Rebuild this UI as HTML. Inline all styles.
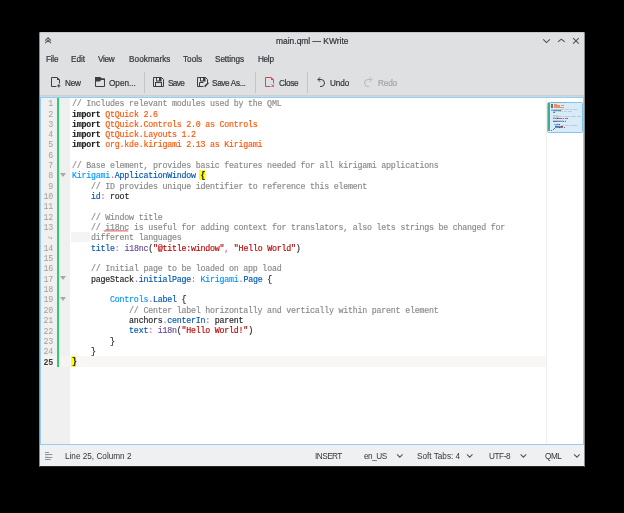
<!DOCTYPE html>
<html><head><meta charset="utf-8">
<style>
html,body{margin:0;padding:0;}
body{width:624px;height:513px;background:#000;position:relative;overflow:hidden;font-family:"Liberation Sans",sans-serif;}
.abs{position:absolute;}
#win{position:absolute;left:39px;top:32px;width:546px;height:435px;background:#dee0e2;border-radius:2px 2px 1px 1px;overflow:hidden;}
#winedge{position:absolute;left:39px;top:32px;width:544px;height:433px;border:1px solid #8a8b8c;border-top-color:#c6c7c8;border-bottom-color:#262728;border-radius:2px 2px 1px 1px;pointer-events:none;}
.ui{position:absolute;will-change:transform;-webkit-text-stroke:0.2px currentColor;white-space:nowrap;font-size:8.20px;line-height:10px;color:#31363b;}
.sep{position:absolute;width:1px;background:#c3c5c7;top:72px;height:21px;}
#toolsep{position:absolute;left:40px;top:95px;width:544px;height:1px;background:#ced0d2;}
#editor{position:absolute;left:40px;top:97px;width:542px;height:346px;border:1px solid #93cef0;background:#fff;overflow:hidden;}
#gutter{position:absolute;left:41px;top:98px;width:29px;height:346px;background:#f0f0f0;}
#green{position:absolute;left:57px;top:98px;width:2px;background:#2ecc71;}
.hl{display:inline-block;height:10.32px;vertical-align:top;background:#ffff00;font-weight:bold;}
.cl{position:absolute;will-change:transform;-webkit-text-stroke:0.15px currentColor;letter-spacing:-0.220px;left:71.70px;white-space:pre;font-family:"Liberation Mono",monospace;font-size:8.30px;line-height:10.32px;height:10.32px;color:#1f1c1b;}
.ln{position:absolute;will-change:transform;letter-spacing:-0.220px;left:41px;width:12px;text-align:right;font-family:"Liberation Mono",monospace;font-size:8.30px;line-height:10.32px;color:#a0a0a0;}
.ln.cur{color:#3a3a3a;font-weight:bold;}
.wrapm{font-size:7px;color:#9a9a9a;width:11.3px;}
.wrapblk{position:absolute;left:71px;width:19px;background:#f4f4f4;}
.mm{position:absolute;height:0.8px;}
.fold{position:absolute;left:59.9px;width:0;height:0;border-left:3.9px solid transparent;border-right:3.9px solid transparent;border-top:4.8px solid #a8a8a8;}
#curline{position:absolute;left:70px;width:476px;height:11px;background:#f8f7f6;}
#wrapline{position:absolute;left:546px;top:98px;width:1px;height:346px;background:#f1eeeb;}
#status{position:absolute;left:40px;top:445px;width:544px;height:21px;background:#eff0f1;}
</style></head>
<body>
<div id="win"></div>
<div id="winedge"></div>
<!-- title bar -->
<svg class="abs" style="left:40px;top:32px" width="16" height="16" viewBox="0 0 16 16"><path d="M5.2 8.6 L8.1 5.8 L11 8.6 M5.2 11.1 L8.1 8.3 L11 11.1" fill="none" stroke="#54585c" stroke-width="1.05"/></svg>
<div class="ui" style="left:275.5px;top:36.4px;font-size:8.45px;">main.qml — KWrite</div>
<svg class="abs" style="left:540px;top:34px" width="44" height="14" viewBox="0 0 44 14"><g fill="none" stroke="#4e5256" stroke-width="1.05"><path d="M3.2 5.3 L6.5 8.6 L9.9 5.3"/><path d="M18 7.9 L21.3 5.1 L24.7 7.9"/><path d="M33.1 4.2 L38.8 9.6 M38.8 4.2 L33.1 9.6"/></g></svg>
<!-- menu -->
<div class="ui" style="left:45.5px;top:54.8px;letter-spacing:-0.25px">File</div>
<div class="ui" style="left:71px;top:54.8px;">Edit</div>
<div class="ui" style="left:97.5px;top:54.8px;letter-spacing:-0.3px">View</div>
<div class="ui" style="left:128.5px;top:54.8px;letter-spacing:0.06px">Bookmarks</div>
<div class="ui" style="left:183px;top:54.8px;">Tools</div>
<div class="ui" style="left:214.5px;top:54.8px;letter-spacing:-0.07px">Settings</div>
<div class="ui" style="left:257.5px;top:54.8px;letter-spacing:-0.3px">Help</div>
<!-- toolbar -->
<svg class="abs" style="left:48px;top:74px" width="16" height="16" viewBox="0 0 16 16"><path d="M8.5 12.5 H3.5 V3.5 H9 L11.5 6 V9.5" fill="none" stroke="#3b3f43" stroke-width="1"/><path d="M9 3 L12 6 H9 Z" fill="#3b3f43"/><path d="M10.8 10.2 V13.4 M9.2 11.8 H12.4" stroke="#3b3f43" stroke-width="1"/></svg>
<div class="ui" style="left:64.5px;top:78.5px;letter-spacing:-0.2px">New</div>
<svg class="abs" style="left:92px;top:74px" width="16" height="16" viewBox="0 0 16 16"><path d="M3.5 12.5 V3.5 H8 L9.5 5 H12.5 V12.5 Z" fill="none" stroke="#3b3f43" stroke-width="1"/><path d="M3 3 H8.2 L9.7 4.5 H13 V6 H9.2 L7.6 7.6 H3 Z" fill="#3b3f43"/></svg>
<div class="ui" style="left:108.5px;top:78.5px;">Open...</div>
<div class="sep" style="left:144px"></div>
<svg class="abs" style="left:150px;top:74px" width="16" height="16" viewBox="0 0 16 16"><path d="M3.5 3.5 H11.5 L13.5 5.5 V12.5 H3.5 Z" fill="none" stroke="#3b3f43" stroke-width="1"/><rect x="6" y="3" width="5.5" height="4.5" fill="#3b3f43"/><rect x="7" y="4" width="2" height="2.5" fill="#e6e7e8"/><rect x="5.5" y="8.5" width="6" height="4" fill="none" stroke="#3b3f43" stroke-width="1"/></svg>
<div class="ui" style="left:167.8px;top:78.5px;letter-spacing:-0.6px">Save</div>
<svg class="abs" style="left:194px;top:74px" width="16" height="16" viewBox="0 0 16 16"><path d="M9.5 12.5 H3.5 V3.5 H11.5 L13.5 5.5 V9" fill="none" stroke="#3b3f43" stroke-width="1"/><rect x="6" y="3" width="5.5" height="4.5" fill="#3b3f43"/><rect x="7" y="4" width="2" height="2.5" fill="#e6e7e8"/><path d="M5.5 12.5 V8.5 H9.5" fill="none" stroke="#3b3f43" stroke-width="1"/><path d="M10.6 12.6 L14.4 8.8" stroke="#3b3f43" stroke-width="1.5"/></svg>
<div class="ui" style="left:211.7px;top:78.5px;letter-spacing:-0.33px">Save As...</div>
<div class="sep" style="left:255px"></div>
<svg class="abs" style="left:262px;top:74px" width="16" height="16" viewBox="0 0 16 16"><path d="M8.5 12.5 H3.5 V3.5 H9 L11.5 6 V9.5" fill="none" stroke="#da4453" stroke-width="1"/><path d="M9 3 L12 6 H9 Z" fill="#da4453"/><path d="M9.5 10.5 L12 13 M12 10.5 L9.5 13" stroke="#da4453" stroke-width="1"/></svg>
<div class="ui" style="left:278.8px;top:78.5px;letter-spacing:-0.37px">Close</div>
<div class="sep" style="left:307px"></div>
<svg class="abs" style="left:313px;top:74px" width="16" height="16" viewBox="0 0 16 16"><path d="M5 5.5 H8 A3.5 3.5 0 0 1 8 12.5 H7" fill="none" stroke="#3b3f43" stroke-width="1"/><path d="M7.2 3.2 L4.9 5.5 L7.2 7.8" fill="none" stroke="#3b3f43" stroke-width="1"/></svg>
<div class="ui" style="left:330.2px;top:78.5px;letter-spacing:-0.1px">Undo</div>
<svg class="abs" style="left:360px;top:74px" width="16" height="16" viewBox="0 0 16 16"><path d="M11 5.5 H8 A3.5 3.5 0 0 0 8 12.5 H9" fill="none" stroke="#b5b7b9" stroke-width="1"/><path d="M9.5 3 L12 5.5 L9.5 8" fill="none" stroke="#b5b7b9" stroke-width="1"/></svg>
<div class="ui" style="left:377.7px;top:78.5px;color:#a3a5a7;letter-spacing:-0.15px">Redo</div>
<div id="toolsep"></div>
<div class="abs" style="left:40px;top:96px;width:544px;height:1px;background:#c9d9e2"></div>
<!-- editor -->
<div id="editor"></div>
<div id="gutter"></div>
<div class="abs" style="left:41px;width:29px;height:11px;top:356.00px;background:#f5f4f3"></div>
<div id="green" style="height:269px"></div>
<div id="curline" style="top:356.00px"></div>
<div id="wrapline"></div>
<div class="abs" style="left:71px;top:356px;width:5px;height:11px;background:#ffff00"></div>
<div class="abs" style="left:199px;top:170px;width:6px;height:10px;background:#ffff00"></div>
<div class="cl" style="top:99.20px"><span style="color:#898887">// Includes relevant modules used by the QML</span></div>
<div class="ln" style="top:99.20px">1</div>
<div class="cl" style="top:109.52px"><span style="color:#1f1c1b;font-weight:bold">import</span> <span style="color:#ff5500">QtQuick 2.6</span></div>
<div class="ln" style="top:109.52px">2</div>
<div class="cl" style="top:119.84px"><span style="color:#1f1c1b;font-weight:bold">import</span> <span style="color:#ff5500">QtQuick.Controls 2.0 as Controls</span></div>
<div class="ln" style="top:119.84px">3</div>
<div class="cl" style="top:130.16px"><span style="color:#1f1c1b;font-weight:bold">import</span> <span style="color:#ff5500">QtQuick.Layouts 1.2</span></div>
<div class="ln" style="top:130.16px">4</div>
<div class="cl" style="top:140.48px"><span style="color:#1f1c1b;font-weight:bold">import</span> <span style="color:#ff5500">org.kde.kirigami 2.13 as Kirigami</span></div>
<div class="ln" style="top:140.48px">5</div>
<div class="cl" style="top:150.80px"></div>
<div class="ln" style="top:150.80px">6</div>
<div class="cl" style="top:161.12px"><span style="color:#898887">// Base element, provides basic features needed for all kirigami applications</span></div>
<div class="ln" style="top:161.12px">7</div>
<div class="cl" style="top:171.44px"><span style="color:#0095ff">Kirigami</span><span style="color:#ca60ca">.</span><span style="color:#0057ae">ApplicationWindow</span> <b>{</b></div>
<div class="ln" style="top:171.44px">8</div>
<div class="fold" style="top:173.24px"></div>
<div class="cl" style="top:181.76px">    <span style="color:#898887">// ID provides unique identifier to reference this element</span></div>
<div class="ln" style="top:181.76px">9</div>
<div class="cl" style="top:192.08px">    <span style="color:#0057ae">id</span><span style="color:#ca60ca">:</span> root</div>
<div class="ln" style="top:192.08px">10</div>
<div class="cl" style="top:202.40px"></div>
<div class="ln" style="top:202.40px">11</div>
<div class="cl" style="top:212.72px">    <span style="color:#898887">// Window title</span></div>
<div class="ln" style="top:212.72px">12</div>
<div class="cl" style="top:223.04px">    <span style="color:#898887">// i18nc is useful for adding context for translators, also lets strings be changed for</span></div>
<div class="ln" style="top:223.04px">13</div>
<div class="cl" style="top:233.36px">    <span style="color:#898887">different languages</span></div>
<div class="ln wrapm" style="top:233.36px">&#8618;</div>
<div class="wrapblk" style="top:232.16px;height:10.32px"></div>
<div class="cl" style="top:243.68px">    <span style="color:#0057ae">title</span><span style="color:#ca60ca">:</span> <span style="color:#644a9b">i18nc</span>(<span style="color:#bf0303">&quot;@title:window&quot;</span><span style="color:#ca60ca">,</span> <span style="color:#bf0303">&quot;Hello World&quot;</span>)</div>
<div class="ln" style="top:243.68px">14</div>
<div class="cl" style="top:254.00px"></div>
<div class="ln" style="top:254.00px">15</div>
<div class="cl" style="top:264.32px">    <span style="color:#898887">// Initial page to be loaded on app load</span></div>
<div class="ln" style="top:264.32px">16</div>
<div class="cl" style="top:274.64px">    pageStack<span style="color:#ca60ca">.</span><span style="color:#0057ae">initialPage</span><span style="color:#ca60ca">:</span> <span style="color:#0095ff">Kirigami</span><span style="color:#ca60ca">.</span><span style="color:#0057ae">Page</span> {</div>
<div class="ln" style="top:274.64px">17</div>
<div class="fold" style="top:276.44px"></div>
<div class="cl" style="top:284.96px"></div>
<div class="ln" style="top:284.96px">18</div>
<div class="cl" style="top:295.28px">        <span style="color:#0095ff">Controls</span><span style="color:#ca60ca">.</span><span style="color:#0057ae">Label</span> {</div>
<div class="ln" style="top:295.28px">19</div>
<div class="fold" style="top:297.08px"></div>
<div class="cl" style="top:305.60px">            <span style="color:#898887">// Center label horizontally and vertically within parent element</span></div>
<div class="ln" style="top:306.00px">20</div>
<div class="cl" style="top:315.92px">            anchors<span style="color:#ca60ca">.</span><span style="color:#0057ae">centerIn</span><span style="color:#ca60ca">:</span> parent</div>
<div class="ln" style="top:316.32px">21</div>
<div class="cl" style="top:326.24px">            <span style="color:#0057ae">text</span><span style="color:#ca60ca">:</span> <span style="color:#644a9b">i18n</span>(<span style="color:#bf0303">&quot;Hello World!&quot;</span>)</div>
<div class="ln" style="top:326.64px">22</div>
<div class="cl" style="top:336.56px">        }</div>
<div class="ln" style="top:336.96px">23</div>
<div class="cl" style="top:346.88px">    }</div>
<div class="ln" style="top:347.28px">24</div>
<div class="cl" style="top:357.20px"><b>}</b></div>
<div class="ln cur" style="top:358.00px">25</div>
<!-- minimap -->
<div class="abs" style="left:547px;top:102px;width:34px;height:29px;background:#d8ebf9;border:1px solid #82c6ef;border-radius:1.5px;"></div>
<div class="abs" style="left:548px;top:103px;width:2px;height:28px;background:#3fae8a;"></div>
<div class="mm" style="left:551.30px;top:102.40px;width:0.66px;background:#898887;opacity:0.32"></div>
<div class="mm" style="left:552.29px;top:102.40px;width:2.64px;background:#898887;opacity:0.32"></div>
<div class="mm" style="left:555.26px;top:102.40px;width:2.64px;background:#898887;opacity:0.32"></div>
<div class="mm" style="left:558.23px;top:102.40px;width:2.31px;background:#898887;opacity:0.32"></div>
<div class="mm" style="left:560.87px;top:102.40px;width:1.32px;background:#898887;opacity:0.32"></div>
<div class="mm" style="left:562.52px;top:102.40px;width:0.66px;background:#898887;opacity:0.32"></div>
<div class="mm" style="left:563.51px;top:102.40px;width:0.99px;background:#898887;opacity:0.32"></div>
<div class="mm" style="left:564.83px;top:102.40px;width:0.99px;background:#898887;opacity:0.32"></div>
<div class="mm" style="left:551.30px;top:103.52px;width:1.98px;background:#1f1c1b;opacity:0.60"></div>
<div class="mm" style="left:553.61px;top:103.52px;width:2.31px;background:#ff5500;opacity:0.60"></div>
<div class="mm" style="left:556.25px;top:103.52px;width:0.99px;background:#ff5500;opacity:0.60"></div>
<div class="mm" style="left:551.30px;top:104.64px;width:1.98px;background:#1f1c1b;opacity:0.60"></div>
<div class="mm" style="left:553.61px;top:104.64px;width:5.28px;background:#ff5500;opacity:0.60"></div>
<div class="mm" style="left:559.22px;top:104.64px;width:0.99px;background:#ff5500;opacity:0.60"></div>
<div class="mm" style="left:560.54px;top:104.64px;width:0.66px;background:#ff5500;opacity:0.60"></div>
<div class="mm" style="left:561.53px;top:104.64px;width:2.64px;background:#ff5500;opacity:0.60"></div>
<div class="mm" style="left:551.30px;top:105.76px;width:1.98px;background:#1f1c1b;opacity:0.60"></div>
<div class="mm" style="left:553.61px;top:105.76px;width:4.95px;background:#ff5500;opacity:0.60"></div>
<div class="mm" style="left:558.89px;top:105.76px;width:0.99px;background:#ff5500;opacity:0.60"></div>
<div class="mm" style="left:551.30px;top:106.88px;width:1.98px;background:#1f1c1b;opacity:0.60"></div>
<div class="mm" style="left:553.61px;top:106.88px;width:5.28px;background:#ff5500;opacity:0.60"></div>
<div class="mm" style="left:559.22px;top:106.88px;width:1.32px;background:#ff5500;opacity:0.60"></div>
<div class="mm" style="left:560.87px;top:106.88px;width:0.66px;background:#ff5500;opacity:0.60"></div>
<div class="mm" style="left:561.86px;top:106.88px;width:2.64px;background:#ff5500;opacity:0.60"></div>
<div class="mm" style="left:551.30px;top:109.12px;width:0.66px;background:#898887;opacity:0.32"></div>
<div class="mm" style="left:552.29px;top:109.12px;width:1.32px;background:#898887;opacity:0.32"></div>
<div class="mm" style="left:553.94px;top:109.12px;width:2.64px;background:#898887;opacity:0.32"></div>
<div class="mm" style="left:556.91px;top:109.12px;width:2.64px;background:#898887;opacity:0.32"></div>
<div class="mm" style="left:559.88px;top:109.12px;width:1.65px;background:#898887;opacity:0.32"></div>
<div class="mm" style="left:561.86px;top:109.12px;width:2.64px;background:#898887;opacity:0.32"></div>
<div class="mm" style="left:564.83px;top:109.12px;width:1.98px;background:#898887;opacity:0.32"></div>
<div class="mm" style="left:567.14px;top:109.12px;width:0.99px;background:#898887;opacity:0.32"></div>
<div class="mm" style="left:568.46px;top:109.12px;width:0.99px;background:#898887;opacity:0.32"></div>
<div class="mm" style="left:569.78px;top:109.12px;width:2.64px;background:#898887;opacity:0.32"></div>
<div class="mm" style="left:572.75px;top:109.12px;width:3.96px;background:#898887;opacity:0.32"></div>
<div class="mm" style="left:551.30px;top:110.24px;width:2.64px;background:#0095ff;opacity:0.60"></div>
<div class="mm" style="left:553.94px;top:110.24px;width:0.33px;background:#ca60ca;opacity:0.60"></div>
<div class="mm" style="left:554.27px;top:110.24px;width:5.61px;background:#0057ae;opacity:0.60"></div>
<div class="mm" style="left:560.21px;top:110.24px;width:0.33px;background:#1f1c1b;opacity:0.60"></div>
<div class="mm" style="left:552.62px;top:111.36px;width:0.66px;background:#898887;opacity:0.32"></div>
<div class="mm" style="left:553.61px;top:111.36px;width:0.66px;background:#898887;opacity:0.32"></div>
<div class="mm" style="left:554.60px;top:111.36px;width:2.64px;background:#898887;opacity:0.32"></div>
<div class="mm" style="left:557.57px;top:111.36px;width:1.98px;background:#898887;opacity:0.32"></div>
<div class="mm" style="left:559.88px;top:111.36px;width:3.30px;background:#898887;opacity:0.32"></div>
<div class="mm" style="left:563.51px;top:111.36px;width:0.66px;background:#898887;opacity:0.32"></div>
<div class="mm" style="left:564.50px;top:111.36px;width:2.97px;background:#898887;opacity:0.32"></div>
<div class="mm" style="left:567.80px;top:111.36px;width:1.32px;background:#898887;opacity:0.32"></div>
<div class="mm" style="left:569.45px;top:111.36px;width:2.31px;background:#898887;opacity:0.32"></div>
<div class="mm" style="left:552.62px;top:112.48px;width:0.66px;background:#0057ae;opacity:0.60"></div>
<div class="mm" style="left:553.28px;top:112.48px;width:0.33px;background:#ca60ca;opacity:0.60"></div>
<div class="mm" style="left:553.94px;top:112.48px;width:1.32px;background:#1f1c1b;opacity:0.60"></div>
<div class="mm" style="left:552.62px;top:114.72px;width:0.66px;background:#898887;opacity:0.32"></div>
<div class="mm" style="left:553.61px;top:114.72px;width:1.98px;background:#898887;opacity:0.32"></div>
<div class="mm" style="left:555.92px;top:114.72px;width:1.65px;background:#898887;opacity:0.32"></div>
<div class="mm" style="left:552.62px;top:115.84px;width:0.66px;background:#898887;opacity:0.32"></div>
<div class="mm" style="left:553.61px;top:115.84px;width:1.65px;background:#898887;opacity:0.32"></div>
<div class="mm" style="left:555.59px;top:115.84px;width:0.66px;background:#898887;opacity:0.32"></div>
<div class="mm" style="left:556.58px;top:115.84px;width:1.98px;background:#898887;opacity:0.32"></div>
<div class="mm" style="left:558.89px;top:115.84px;width:0.99px;background:#898887;opacity:0.32"></div>
<div class="mm" style="left:560.21px;top:115.84px;width:1.98px;background:#898887;opacity:0.32"></div>
<div class="mm" style="left:562.52px;top:115.84px;width:2.31px;background:#898887;opacity:0.32"></div>
<div class="mm" style="left:565.16px;top:115.84px;width:0.99px;background:#898887;opacity:0.32"></div>
<div class="mm" style="left:566.48px;top:115.84px;width:3.96px;background:#898887;opacity:0.32"></div>
<div class="mm" style="left:570.77px;top:115.84px;width:1.32px;background:#898887;opacity:0.32"></div>
<div class="mm" style="left:572.42px;top:115.84px;width:1.32px;background:#898887;opacity:0.32"></div>
<div class="mm" style="left:574.07px;top:115.84px;width:2.31px;background:#898887;opacity:0.32"></div>
<div class="mm" style="left:576.71px;top:115.84px;width:0.66px;background:#898887;opacity:0.32"></div>
<div class="mm" style="left:577.70px;top:115.84px;width:2.31px;background:#898887;opacity:0.32"></div>
<div class="mm" style="left:580.34px;top:115.84px;width:0.99px;background:#898887;opacity:0.32"></div>
<div class="mm" style="left:552.62px;top:116.96px;width:2.97px;background:#898887;opacity:0.32"></div>
<div class="mm" style="left:555.92px;top:116.96px;width:2.97px;background:#898887;opacity:0.32"></div>
<div class="mm" style="left:552.62px;top:118.08px;width:1.65px;background:#0057ae;opacity:0.60"></div>
<div class="mm" style="left:554.27px;top:118.08px;width:0.33px;background:#ca60ca;opacity:0.60"></div>
<div class="mm" style="left:554.93px;top:118.08px;width:1.65px;background:#644a9b;opacity:0.60"></div>
<div class="mm" style="left:556.58px;top:118.08px;width:0.33px;background:#1f1c1b;opacity:0.60"></div>
<div class="mm" style="left:556.91px;top:118.08px;width:4.95px;background:#bf0303;opacity:0.60"></div>
<div class="mm" style="left:561.86px;top:118.08px;width:0.33px;background:#ca60ca;opacity:0.60"></div>
<div class="mm" style="left:562.52px;top:118.08px;width:1.98px;background:#bf0303;opacity:0.60"></div>
<div class="mm" style="left:564.83px;top:118.08px;width:1.98px;background:#bf0303;opacity:0.60"></div>
<div class="mm" style="left:566.81px;top:118.08px;width:0.33px;background:#1f1c1b;opacity:0.60"></div>
<div class="mm" style="left:552.62px;top:120.32px;width:0.66px;background:#898887;opacity:0.32"></div>
<div class="mm" style="left:553.61px;top:120.32px;width:2.31px;background:#898887;opacity:0.32"></div>
<div class="mm" style="left:556.25px;top:120.32px;width:1.32px;background:#898887;opacity:0.32"></div>
<div class="mm" style="left:557.90px;top:120.32px;width:0.66px;background:#898887;opacity:0.32"></div>
<div class="mm" style="left:558.89px;top:120.32px;width:0.66px;background:#898887;opacity:0.32"></div>
<div class="mm" style="left:559.88px;top:120.32px;width:1.98px;background:#898887;opacity:0.32"></div>
<div class="mm" style="left:562.19px;top:120.32px;width:0.66px;background:#898887;opacity:0.32"></div>
<div class="mm" style="left:563.18px;top:120.32px;width:0.99px;background:#898887;opacity:0.32"></div>
<div class="mm" style="left:564.50px;top:120.32px;width:1.32px;background:#898887;opacity:0.32"></div>
<div class="mm" style="left:552.62px;top:121.44px;width:2.97px;background:#1f1c1b;opacity:0.60"></div>
<div class="mm" style="left:555.59px;top:121.44px;width:0.33px;background:#ca60ca;opacity:0.60"></div>
<div class="mm" style="left:555.92px;top:121.44px;width:3.63px;background:#0057ae;opacity:0.60"></div>
<div class="mm" style="left:559.55px;top:121.44px;width:0.33px;background:#ca60ca;opacity:0.60"></div>
<div class="mm" style="left:560.21px;top:121.44px;width:2.64px;background:#0095ff;opacity:0.60"></div>
<div class="mm" style="left:562.85px;top:121.44px;width:0.33px;background:#ca60ca;opacity:0.60"></div>
<div class="mm" style="left:563.18px;top:121.44px;width:1.32px;background:#0057ae;opacity:0.60"></div>
<div class="mm" style="left:564.83px;top:121.44px;width:0.33px;background:#1f1c1b;opacity:0.60"></div>
<div class="mm" style="left:553.94px;top:123.68px;width:2.64px;background:#0095ff;opacity:0.60"></div>
<div class="mm" style="left:556.58px;top:123.68px;width:0.33px;background:#ca60ca;opacity:0.60"></div>
<div class="mm" style="left:556.91px;top:123.68px;width:1.65px;background:#0057ae;opacity:0.60"></div>
<div class="mm" style="left:558.89px;top:123.68px;width:0.33px;background:#1f1c1b;opacity:0.60"></div>
<div class="mm" style="left:555.26px;top:124.80px;width:0.66px;background:#898887;opacity:0.32"></div>
<div class="mm" style="left:556.25px;top:124.80px;width:1.98px;background:#898887;opacity:0.32"></div>
<div class="mm" style="left:558.56px;top:124.80px;width:1.65px;background:#898887;opacity:0.32"></div>
<div class="mm" style="left:560.54px;top:124.80px;width:3.96px;background:#898887;opacity:0.32"></div>
<div class="mm" style="left:564.83px;top:124.80px;width:0.99px;background:#898887;opacity:0.32"></div>
<div class="mm" style="left:566.15px;top:124.80px;width:3.30px;background:#898887;opacity:0.32"></div>
<div class="mm" style="left:569.78px;top:124.80px;width:1.98px;background:#898887;opacity:0.32"></div>
<div class="mm" style="left:572.09px;top:124.80px;width:1.98px;background:#898887;opacity:0.32"></div>
<div class="mm" style="left:574.40px;top:124.80px;width:2.31px;background:#898887;opacity:0.32"></div>
<div class="mm" style="left:555.26px;top:125.92px;width:2.31px;background:#1f1c1b;opacity:0.60"></div>
<div class="mm" style="left:557.57px;top:125.92px;width:0.33px;background:#ca60ca;opacity:0.60"></div>
<div class="mm" style="left:557.90px;top:125.92px;width:2.64px;background:#0057ae;opacity:0.60"></div>
<div class="mm" style="left:560.54px;top:125.92px;width:0.33px;background:#ca60ca;opacity:0.60"></div>
<div class="mm" style="left:561.20px;top:125.92px;width:1.98px;background:#1f1c1b;opacity:0.60"></div>
<div class="mm" style="left:555.26px;top:127.04px;width:1.32px;background:#0057ae;opacity:0.60"></div>
<div class="mm" style="left:556.58px;top:127.04px;width:0.33px;background:#ca60ca;opacity:0.60"></div>
<div class="mm" style="left:557.24px;top:127.04px;width:1.32px;background:#644a9b;opacity:0.60"></div>
<div class="mm" style="left:558.56px;top:127.04px;width:0.33px;background:#1f1c1b;opacity:0.60"></div>
<div class="mm" style="left:558.89px;top:127.04px;width:1.98px;background:#bf0303;opacity:0.60"></div>
<div class="mm" style="left:561.20px;top:127.04px;width:2.31px;background:#bf0303;opacity:0.60"></div>
<div class="mm" style="left:563.51px;top:127.04px;width:0.33px;background:#1f1c1b;opacity:0.60"></div>
<div class="mm" style="left:553.94px;top:128.16px;width:0.33px;background:#1f1c1b;opacity:0.60"></div>
<div class="mm" style="left:552.62px;top:129.28px;width:0.33px;background:#1f1c1b;opacity:0.60"></div>
<div class="mm" style="left:551.30px;top:130.40px;width:0.33px;background:#1f1c1b;opacity:0.60"></div>
<svg class="abs" style="left:100px;top:226px" width="32" height="8" viewBox="0 0 32 8"><polyline points="4,4.2 5,5.5 6,4.2 7,5.5 8,4.2 9,5.5 10,4.2 11,5.5 12,4.2 13,5.5 14,4.2 15,5.5 16,4.2 17,5.5 18,4.2 19,5.5 20,4.2 21,5.5 22,4.2 23,5.5 24,4.2 25,5.5 26,4.2 27,5.5 28,4.2" fill="none" stroke="#cf3a3a" stroke-width="0.75"/></svg>
<!-- status -->
<div id="status"></div>
<svg class="abs" style="left:42px;top:448px" width="16" height="16" viewBox="0 0 16 16"><g fill="#8b929a"><rect x="3" y="4" width="4" height="1"/><rect x="3" y="6" width="7.3" height="1"/><rect x="3" y="7.6" width="3.6" height="1" opacity="0.35"/><rect x="3" y="9" width="7.3" height="1"/><rect x="3" y="11" width="5.7" height="1"/></g></svg>
<div class="ui" style="left:65.3px;top:452px;-webkit-text-stroke:0;letter-spacing:0px">Line 25, Column 2</div>
<div class="ui" style="left:314.5px;top:452px;-webkit-text-stroke:0;letter-spacing:-0.5px">INSERT</div>
<div class="ui" style="left:364.4px;top:452px;-webkit-text-stroke:0;letter-spacing:-0.45px">en_US</div>
<div class="ui" style="left:416.6px;top:452px;-webkit-text-stroke:0;letter-spacing:0px">Soft Tabs: 4</div>
<div class="ui" style="left:489.3px;top:452px;-webkit-text-stroke:0;letter-spacing:-0.4px">UTF-8</div>
<div class="ui" style="left:544.6px;top:452px;-webkit-text-stroke:0;letter-spacing:-0.45px">QML</div>
<svg class="abs" style="left:390px;top:450px" width="200" height="12" viewBox="0 0 200 12"><g fill="none" stroke="#55595d" stroke-width="1.1"><path d="M7 4.4 L9.8 7.2 L12.6 4.4"/><path d="M76.9 4.4 L79.7 7.2 L82.5 4.4"/><path d="M130.6 4.4 L133.4 7.2 L136.2 4.4"/><path d="M184.1 4.4 L186.9 7.2 L189.7 4.4"/></g></svg>
</body></html>
